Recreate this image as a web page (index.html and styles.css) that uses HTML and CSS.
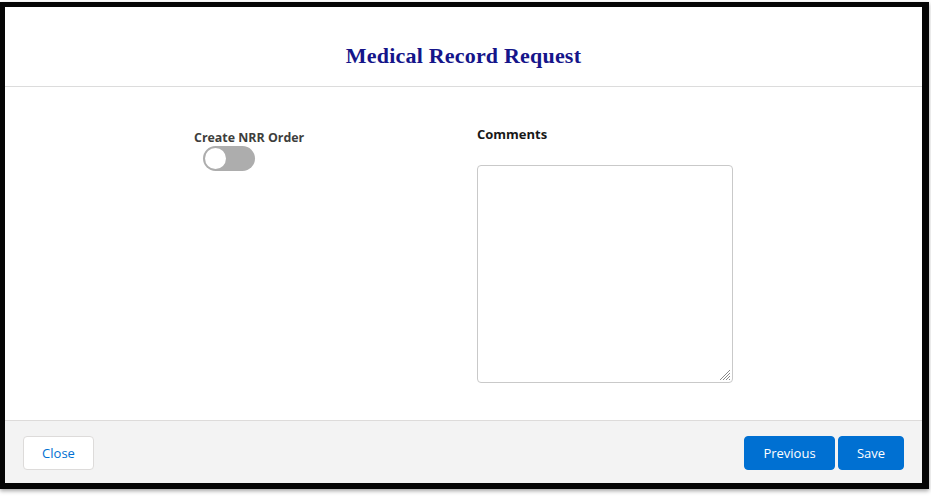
FILE: index.html
```html
<!DOCTYPE html>
<html>
<head>
<meta charset="utf-8">
<link rel="stylesheet" href="styles.css">
</head>
<body>
<div class="frame">
  <header class="modal-header">
    <h1 class="title">Medical Record Request</h1>
  </header>
  <main class="modal-body">
    <div class="col-left">
      <div class="field-label">Create NRR Order</div>
      <div class="toggle"><span class="knob"></span></div>
    </div>
    <div class="col-right">
      <div class="comments-label">Comments</div>
      <div class="textarea">
        <svg class="grip" width="14" height="14" viewBox="0 0 14 14">
          <path d="M13 3 L3 13 M13 6 L6 13 M13 9 L9 13 M13 12 L12 13" stroke="#8a8a8a" stroke-width="1" fill="none"/>
        </svg>
      </div>
    </div>
  </main>
  <footer class="modal-footer">
    <button class="btn btn-neutral">Close</button>
    <div class="right-btns">
      <button class="btn btn-brand btn-prev">Previous</button>
      <button class="btn btn-brand btn-save">Save</button>
    </div>
  </footer>
</div>
</body>
</html>
```
FILE: styles.css
```css
html, body {
  margin: 0;
  padding: 0;
  background: #ffffff;
}
body {
  width: 931px;
  height: 498px;
  overflow: hidden;
  font-family: "Open Sans", "Noto Sans", sans-serif;
}
.frame {
  margin-top: 2px;
  width: 929px;
  height: 487px;
  box-sizing: border-box;
  border: 5px solid #050505;
  border-right-width: 7px;
  border-bottom-width: 6px;
  display: flex;
  flex-direction: column;
  box-shadow: 0 2px 4px rgba(0,0,0,0.35);
  background: #fff;
}
.modal-header {
  height: 79px;
  border-bottom: 1px solid #dcdcdc;
  display: flex;
  align-items: center;
  justify-content: center;
  flex-shrink: 0;
}
.title {
  margin: 0;
  padding-top: 18px;
  font-family: "Liberation Serif", "DejaVu Serif", serif;
  font-weight: 700;
  font-size: 22px;
  color: #15158a;
  letter-spacing: 0.2px;
}
.modal-body {
  flex: 1;
  display: flex;
  background: #fff;
}
.col-left {
  width: 189px;
  padding-left: 189px;
  padding-top: 43px;
}
.field-label {
  font-size: 12.4px;
  font-weight: 700;
  color: #3e3e3c;
  line-height: 16px;
}
.toggle {
  margin-left: 9px;
  margin-top: 0px;
  width: 52px;
  height: 25px;
  border-radius: 13px;
  background: #adadad;
  position: relative;
}
.knob {
  position: absolute;
  left: 2px;
  top: 2px;
  width: 21px;
  height: 21px;
  border-radius: 50%;
  background: #fff;
}
.col-right {
  margin-left: 94px;
  padding-top: 38px;
}
.comments-label {
  font-size: 13px;
  font-weight: 700;
  color: #181818;
  line-height: 18px;
}
.textarea {
  margin-top: 22px;
  width: 256px;
  height: 218px;
  box-sizing: border-box;
  border: 1px solid #c9c9c9;
  border-radius: 4px;
  position: relative;
}
.grip {
  position: absolute;
  right: 1px;
  bottom: 1px;
}
.modal-footer {
  height: 62px;
  border-top: 1px solid #dddbda;
  background: #f3f3f3;
  display: flex;
  align-items: center;
  justify-content: space-between;
  padding: 0 18px 0 18px;
  flex-shrink: 0;
}
.right-btns {
  display: flex;
  gap: 3px;
}
.btn {
  height: 34px;
  border-radius: 4px;
  font-family: "Open Sans", "Noto Sans", sans-serif;
  font-size: 13px;
  padding: 0;
  cursor: pointer;
  margin-top: 1px;
}
.btn-neutral {
  width: 71px;
  background: #fff;
  border: 1px solid #dddbda;
  color: #0070d2;
}
.btn-brand {
  background: #0070d2;
  border: 1px solid #0070d2;
  color: #fff;
}
.btn-prev { width: 91px; }
.btn-save { width: 66px; }
```
